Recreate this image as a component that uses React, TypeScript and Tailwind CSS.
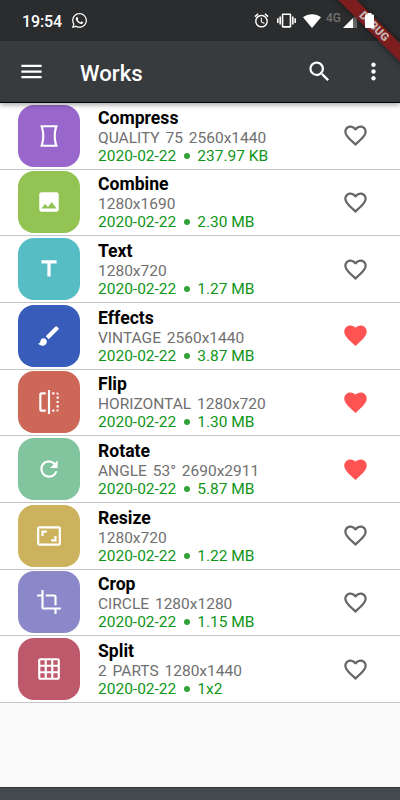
import React from "react";
import type { IconType } from "react-icons";
import {
  MdAlarm, MdAspectRatio, MdBrush, MdCrop, MdFavorite, MdFavoriteBorder, MdFlip,
  MdGridOn, MdImage, MdMenu, MdMoreVert, MdRefresh, MdSearch, MdTitle, MdVibration,
} from "react-icons/md";
import { FaWhatsapp } from "react-icons/fa";

function PanoramaVertical({ size }: { size?: number | string }) {
  return (
    <svg viewBox="0 0 24 24" width={size} height={size} fill="currentColor">
      <path d="M19.94 21.12c-1.1-2.94-1.64-6.03-1.64-9.12 0-3.09.55-6.18 1.64-9.12.04-.11.06-.22.06-.31 0-.34-.23-.57-.63-.57H4.63c-.4 0-.63.23-.63.57 0 .1.02.2.06.31C5.16 5.82 5.71 8.91 5.71 12c0 3.09-.55 6.18-1.64 9.12-.05.11-.07.22-.07.31 0 .33.23.57.63.57h14.75c.39 0 .63-.24.63-.57-.01-.1-.03-.2-.07-.31zM6.54 20c.77-2.6 1.16-5.28 1.16-8s-.39-5.4-1.16-8h10.91c-.77 2.6-1.16 5.28-1.16 8s.39 5.4 1.16 8H6.54z" />
    </svg>
  );
}

type Work = {
  name: string;
  detail: string;
  size: string;
  color: string;
  Icon: IconType | typeof PanoramaVertical;
  liked?: boolean;
};

const works: Work[] = [
  { name: "Compress", detail: "QUALITY 75 2560x1440", size: "237.97 KB", color: "bg-[#9966cc]", Icon: PanoramaVertical },
  { name: "Combine", detail: "1280x1690", size: "2.30 MB", color: "bg-[#92c353]", Icon: MdImage },
  { name: "Text", detail: "1280x720", size: "1.27 MB", color: "bg-[#56bdc5]", Icon: MdTitle },
  { name: "Effects", detail: "VINTAGE 2560x1440", size: "3.87 MB", color: "bg-[#385cb9]", Icon: MdBrush, liked: true },
  { name: "Flip", detail: "HORIZONTAL 1280x720", size: "1.30 MB", color: "bg-[#cd6858]", Icon: MdFlip, liked: true },
  { name: "Rotate", detail: "ANGLE 53° 2690x2911", size: "5.87 MB", color: "bg-[#81c49d]", Icon: MdRefresh, liked: true },
  { name: "Resize", detail: "1280x720", size: "1.22 MB", color: "bg-[#ccb25c]", Icon: MdAspectRatio },
  { name: "Crop", detail: "CIRCLE 1280x1280", size: "1.15 MB", color: "bg-[#8b88ca]", Icon: MdCrop },
  { name: "Split", detail: "2 PARTS 1280x1440", size: "1x2", color: "bg-[#be586b]", Icon: MdGridOn },
];

function StatusBar() {
  return (
    <div className="flex h-[41px] shrink-0 items-center bg-[#2b2c2d] pl-[22px] text-white">
      <span className="w-[49px] pt-[2px] text-[16px] font-medium leading-none tracking-[-0.15px]">19:54</span>
      <FaWhatsapp size={17} />
      <div className="ml-[165px] flex items-center">
        <MdAlarm size={17} />
        <MdVibration size={19} className="ml-[7px]" />
        <svg width="18" height="14" viewBox="0 0 18 14" className="ml-[7px]">
          <path d="M0 3.2C5-.9 13-.9 18 3.2L9 14z" fill="#fff" />
        </svg>
        <span className="ml-[5px] -mt-[5px] w-[17px] text-[12px] font-medium leading-none text-[#707172]">4G</span>
        <svg width="14" height="14" viewBox="0 0 14 14">
          <path d="M0 14L14 0V14z" fill="#6b6b6b" />
          <path d="M0 14L10 4V14z" fill="#fff" />
        </svg>
        <svg width="9" height="15" viewBox="0 0 9 15" className="relative z-20 ml-[8px]">
          <path d="M2.5 0h4v1.5H8q1 0 1 1V14q0 1-1 1H1q-1 0-1-1V2.5q0-1 1-1h1.5z" fill="#fff" />
        </svg>
      </div>
    </div>
  );
}

function WorkRow({ work }: { work: Work }) {
  const { Icon } = work;
  return (
    <li className="flex h-[66.67px] items-center border-b border-[#c6c6c6] bg-white pl-[18px] pr-[31px]">
      <div className={`flex size-[62px] shrink-0 items-center justify-center rounded-[16px] text-white ${work.color}`}>
        <Icon size={26} />
      </div>
      <div className="ml-[18px] flex-1 whitespace-nowrap pt-px">
        <div className="text-[17.6px] font-bold leading-[20px] text-black">{work.name}</div>
        <div className="pt-px text-[15.5px] leading-[18px] text-[#707070] [word-spacing:2px]">{work.detail}</div>
        <div className="flex items-center text-[15.5px] leading-[18px] text-[#109618]">
          <span>2020-02-22</span>
          <span className="ml-[8px] mr-[7px] size-[6px] rounded-full bg-[#34a23a]" />
          <span>{work.size}</span>
        </div>
      </div>
      {work.liked ? <MdFavorite size={27} className="text-[#ff5252]" /> : <MdFavoriteBorder size={27} className="text-[#666]" />}
    </li>
  );
}

export default function App() {
  return (
    <div className="relative flex h-[800px] w-[400px] flex-col overflow-hidden bg-[#fafafa] font-[Roboto,sans-serif]">
      <StatusBar />
      <header className="relative z-[1] flex h-[62px] shrink-0 items-center border-b border-black bg-[#373b3e] pl-[18px] pr-[13px] text-white shadow-[0_2px_5px_rgba(0,0,0,0.35)]">
        <MdMenu size={27} />
        <h1 className="ml-[35px] flex-1 pt-[3px] text-[22.2px] font-medium leading-none">Works</h1>
        <MdSearch size={27} className="mr-[27px]" />
        <MdMoreVert size={27} />
      </header>
      <ul>
        {works.map((work) => (
          <WorkRow key={work.name} work={work} />
        ))}
      </ul>
      <div className="mt-auto h-[13px] border-t border-[#30373a] bg-[#434b4f]" />
      <div className="absolute left-[313.5px] top-[20px] z-10 flex h-[12.8px] w-[120px] rotate-45 items-center justify-center bg-[#7d1d1e] text-[11.5px] font-black leading-none text-[#c5b4b4] shadow-[0_0_6px_rgba(0,0,0,0.5)]">
        DEBUG
      </div>
    </div>
  );
}
